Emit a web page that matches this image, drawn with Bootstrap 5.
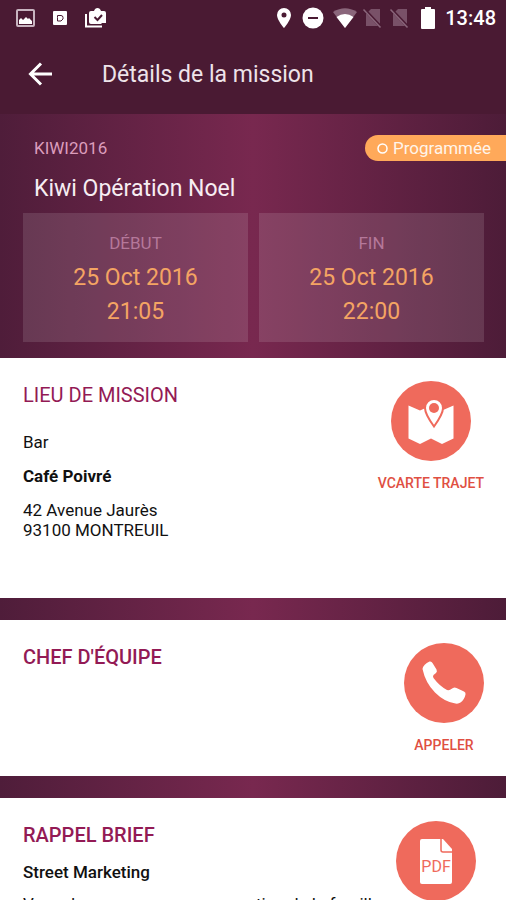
<!DOCTYPE html>
<html lang="fr">
<head>
<meta charset="utf-8">
<meta name="viewport" content="width=device-width, initial-scale=1">
<title>Détails de la mission</title>
<link rel="stylesheet" href="https://cdn.jsdelivr.net/npm/bootstrap@5.3.0/dist/css/bootstrap.min.css">
<style>
:root { --plum: #4a1a33; --coral: #ef6a5c; --coral-text: #e04f42; --magenta: #931a55; --amber: #ffa95a; }
body { font-family: Roboto, "Liberation Sans", sans-serif; color: #111; background: #fff; }
.screen { height: 100vh; overflow: hidden; }
.top-area { background: var(--plum); }
.status-bar { height: 36px; padding: 0 10px 0 16px; }
.status-left { gap: 15px; }
.status-right { gap: 5px; }
.clock { font-size: 20px; line-height: 24px; font-weight: 500; margin-left: 4px; }
.app-bar { height: 78px; padding: 0 24px; gap: 46px; }
.app-bar h1 { font-size: 23px; line-height: 28px; color: #eee3e9; }
.back-btn { width: 32px; height: 32px; }
.plum-band { background: linear-gradient(90deg, #4f1d3a 0%, #78284f 50%, #4d1c38 100%); }
.divider { height: 22px; }
.hero { padding: 20px 22px 16px 23px; }
.mission-code { font-size: 17px; line-height: 28px; color: #dc9dbc; padding-left: 11px; }
.mission-name { font-size: 23px; line-height: 28px; color: #f7edf2; padding-left: 11px; margin: 13px 0 10px; }
.status-pill { background: var(--amber); font-size: 17px; line-height: 26px; color: #fff5ea; border-radius: 13px 0 0 13px; padding: 0 15px 0 12px; gap: 5px; margin-right: -22px; }
.slots { gap: 11px; }
.slot { background: rgba(255,255,255,.12); padding: 16px 0 13px; }
.slot-label { font-size: 17px; line-height: 28px; margin-bottom: 4px; color: #b5789a; }
.slot-value { font-size: 23px; line-height: 34px; color: #f4a463; }
.panel { padding: 23px 22px 0 23px; }
.panel-place { min-height: 240px; }
.panel-chief { min-height: 156px; }
.panel h2 { font-size: 20px; line-height: 28px; color: var(--magenta); }
.copy, .copy address { font-size: 17px; line-height: 20px; }
.panel-place h2 { margin-bottom: 23px; }
.panel-place p { margin-bottom: 14px; }
.brief h2 { margin-bottom: 13px; }
.brief p { margin-bottom: 12px; }
.action { font-size: 14px; line-height: 20px; font-weight: 500; color: var(--coral-text); gap: 12px; }
.disc { width: 80px; height: 80px; }
.action-pdf { margin-right: 8px; }
</style>
<script src="https://cdn.jsdelivr.net/npm/bootstrap@5.3.0/dist/js/bootstrap.bundle.min.js"></script>
</head>
<body>
<div class="screen">
  <header class="top-area text-white">
    <div class="status-bar d-flex align-items-center justify-content-between">
      <div class="status-left d-flex align-items-center">
        <svg width="19" height="18" viewBox="0 0 19 18" aria-hidden="true"><rect x="1" y="1" width="17" height="16" rx="1" fill="none" stroke="#c8b4c0" stroke-width="2"/><path d="M3 15v-4l2-2 2 2 3-3 2 2 1-1 3 3v3z" fill="#fff"/></svg>
        <svg width="20" height="20" viewBox="0 0 20 20" aria-hidden="true"><rect x="3" y="3" width="14" height="14" rx="1" fill="#fff"/><path d="M7.500 7.500h3.500a2 2 0 0 1 2 2v1.500l-2 2h-3.500v-3.500z" fill="none" stroke="#4a1a33" stroke-width="1"/></svg>
        <svg width="22" height="22" viewBox="0 0 22 22" aria-hidden="true"><path d="M1 7v12.500h16" fill="none" stroke="#fff" stroke-width="2"/><path d="M4 6q0-2 2-2h3q1-3 3.500-3T16 4h3q2 0 2 2v10h-4l-1 1H6q-2 0-2-2z" fill="#fff"/><path d="M9.500 10l3 3 4.500-5" fill="none" stroke="#4a1a33" stroke-width="2"/></svg>
      </div>
      <div class="status-right d-flex align-items-center">
        <svg width="18" height="22" viewBox="0 0 18 22" aria-hidden="true"><path fill="#fff" fill-rule="evenodd" d="M9 1a7 7 0 0 0-7 7c0 5 7 13 7 13s7-8 7-13a7 7 0 0 0-7-7zm0 4.500a2.500 2.500 0 1 1 0 5 2.500 2.500 0 0 1 0-5z"/></svg>
        <svg class="mx-1" width="22" height="22" viewBox="0 0 22 22" aria-hidden="true"><circle cx="11" cy="11" r="10.500" fill="#fff"/><path d="M6 11h10" stroke="#4a1a33" stroke-width="2"/></svg>
        <svg width="24" height="20" viewBox="0 0 24 20" aria-hidden="true"><path d="M0 4q12-7.500 24 0L12 20z" fill="#8a667b"/><path d="M3.500 9q8.500-6 17 0L12 20z" fill="#fff"/></svg>
        <svg width="22" height="22" viewBox="0 0 22 22" aria-hidden="true"><path d="M9 2h9v17H4V7z" fill="#795168"/><path d="M2.500 2.500l17 18" stroke="#4a1a33" stroke-width="3"/><path d="M1.500 2.500l17 18" stroke="#8a667b" stroke-width="1.500"/></svg>
        <svg width="22" height="22" viewBox="0 0 22 22" aria-hidden="true"><path d="M9 2h9v17H4V7z" fill="#795168"/><path d="M2.500 2.500l17 18" stroke="#4a1a33" stroke-width="3"/><path d="M1.500 2.500l17 18" stroke="#8a667b" stroke-width="1.500"/></svg>
        <svg class="ms-1" width="16" height="22" viewBox="3 0 16 22" aria-hidden="true"><path d="M8 0h6v2h3q1 0 1 1v18q0 1-1 1H5q-1 0-1-1V3q0-1 1-1h3z" fill="#fff"/></svg>
        <span class="clock">13:48</span>
      </div>
    </div>
    <div class="app-bar d-flex align-items-center">
      <button type="button" class="back-btn btn p-0 border-0 d-flex align-items-center justify-content-center" aria-label="Retour">
        <svg width="26" height="26" viewBox="0 0 26 26" fill="none" stroke="#fff" stroke-width="3" aria-hidden="true"><path d="M25 12H4M14 1.500L3.500 12 14 22.500"/></svg>
      </button>
      <h1 class="m-0 fw-normal">Détails de la mission</h1>
    </div>
  </header>
  <main>
    <section class="hero plum-band">
      <div class="d-flex align-items-center justify-content-between">
        <div class="mission-code">KIWI2016</div>
        <div class="status-pill d-flex align-items-center">
          <svg width="11" height="11" viewBox="0 0 11 11" aria-hidden="true"><circle cx="5.500" cy="5.500" r="4.500" fill="none" stroke="#fff" stroke-width="1.500"/></svg>
          <span>Programmée</span>
        </div>
      </div>
      <h2 class="mission-name fw-normal">Kiwi Opération Noel</h2>
      <div class="slots d-flex text-center">
        <div class="slot flex-fill w-50">
          <div class="slot-label">DÉBUT</div>
          <div class="slot-value">25 Oct 2016</div>
          <div class="slot-value">21:05</div>
        </div>
        <div class="slot flex-fill w-50">
          <div class="slot-label">FIN</div>
          <div class="slot-value">25 Oct 2016</div>
          <div class="slot-value">22:00</div>
        </div>
      </div>
    </section>

    <section class="panel panel-place d-flex justify-content-between align-items-start">
      <div class="copy">
        <h2 class="fw-normal">LIEU DE MISSION</h2>
        <p>Bar</p>
        <p class="fw-bold">Café Poivré</p>
        <address class="m-0">42 Avenue Jaurès<br>93100 MONTREUIL</address>
      </div>
      <a href="#carte" class="action d-flex flex-column align-items-center text-decoration-none">
        <svg class="disc" viewBox="0 0 80 80" aria-hidden="true"><circle cx="40" cy="40" r="40" fill="#ef6a5c"/><path d="M17.500 24.500l11.500 5 11-5 11 5 11.500-5v33L51 63l-11-5.500L29 63l-11.500-5.500z" fill="#fff"/><path d="M43 18a9 9 0 0 0-9 9c0 6 9 18.500 9 18.500S52 33 52 27a9 9 0 0 0-9-9z" fill="#fff" stroke="#ef6a5c" stroke-width="2"/><circle cx="43" cy="27" r="5" fill="#ef6a5c"/></svg>
        <span>VCARTE TRAJET</span>
      </a>
    </section>
    <div class="divider plum-band"></div>

    <section class="panel panel-chief d-flex justify-content-between align-items-start">
      <h2 class="fw-medium m-0">CHEF D'ÉQUIPE</h2>
      <a href="#appeler" class="action d-flex flex-column align-items-center text-decoration-none">
        <svg class="disc" viewBox="0 0 80 80" aria-hidden="true"><circle cx="40" cy="40" r="40" fill="#ef6a5c"/><path d="M18.500 26q1-5 7-7.500 2-.5 3 1.500l4 6.500q1 2-.5 3.500l-2.500 2q-1 1.500 0 3 6 8 13.500 12 2 .5 3.500-.5l2.500-1.500q1.500-1 3.500 0l7.500 3.500q2 1 1.500 3-1 5-5 8-2 1.500-5 1-11-1.500-20.500-11T18.500 26z" fill="#fff"/></svg>
        <span>APPELER</span>
      </a>
    </section>
    <div class="divider plum-band"></div>

    <section class="panel brief d-flex justify-content-between align-items-start">
      <div class="copy">
        <h2 class="fw-medium">RAPPEL BRIEF</h2>
        <p class="fw-medium">Street Marketing</p>
        <p>Vous devez assurer une promotion de la famille</p>
      </div>
      <a href="#brief" class="action action-pdf d-flex flex-column align-items-center text-decoration-none" aria-label="PDF">
        <svg class="disc" viewBox="0 0 80 80" aria-hidden="true"><circle cx="40" cy="40" r="40" fill="#ef6a5c"/><path d="M26 18h21l9 10v33q0 2-2 2H26q-2 0-2-2V20q0-2 2-2z" fill="#fff"/><path d="M45 18v11q0 2 2 2h9" fill="none" stroke="#ef6a5c" stroke-width="1.500"/><text x="40" y="51" text-anchor="middle" font-size="16" font-family="Roboto, sans-serif" font-weight="400" fill="#ef6a5c">PDF</text></svg>
      </a>
    </section>
  </main>
</div>
</body>
</html>
